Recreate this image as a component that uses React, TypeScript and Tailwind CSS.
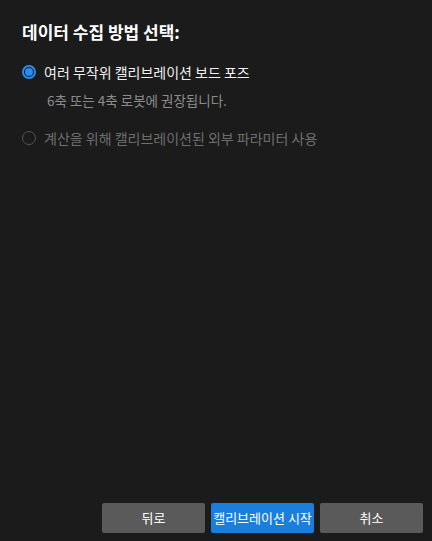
const App = () => {
  return (
    <div
      className="w-[432px] h-[541px] bg-[#1b1b1b] flex flex-col text-[#e6e6e6]"
      style={{ fontFamily: '"Noto Sans CJK KR", "Noto Sans", sans-serif' }}
    >
      <div className="px-[22px] pt-[20px]">
        <h1 className="text-[17px] font-bold text-white leading-[24px]">데이터 수집 방법 선택:</h1>

        <label className="flex items-center gap-[8px] mt-[18px] text-[14px] leading-[20px] text-[#f0f0f0]">
          <span className="w-[14px] h-[14px] rounded-full border-[2px] border-[#2a8cf0] flex items-center justify-center">
            <span className="w-[8px] h-[8px] rounded-full bg-[#2a8cf0]" />
          </span>
          여러 무작위 캘리브레이션 보드 포즈
        </label>
        <p className="ml-[25px] mt-[8px] text-[13.5px] leading-[20px] text-[#8c8c8c]">
          6축 또는 4축 로봇에 권장됩니다.
        </p>

        <label className="flex items-center gap-[8px] mt-[18px] text-[14px] leading-[20px] text-[#6e6e6e]">
          <span className="w-[14px] h-[14px] rounded-full border-[1.5px] border-[#555555]" />
          계산을 위해 캘리브레이션된 외부 파라미터 사용
        </label>
      </div>

      <div className="mt-auto flex justify-end gap-[6px] pr-[9px] pb-[8px]">
        <button className="w-[103px] h-[30px] rounded-[2px] bg-[#5a5a5a] text-[13px] text-white">뒤로</button>
        <button className="w-[103px] h-[30px] rounded-[2px] bg-[#1a7fdc] text-[13px] text-white whitespace-nowrap">
          캘리브레이션 시작
        </button>
        <button className="w-[103px] h-[30px] rounded-[2px] bg-[#5a5a5a] text-[13px] text-white">취소</button>
      </div>
    </div>
  );
};

export default App;
